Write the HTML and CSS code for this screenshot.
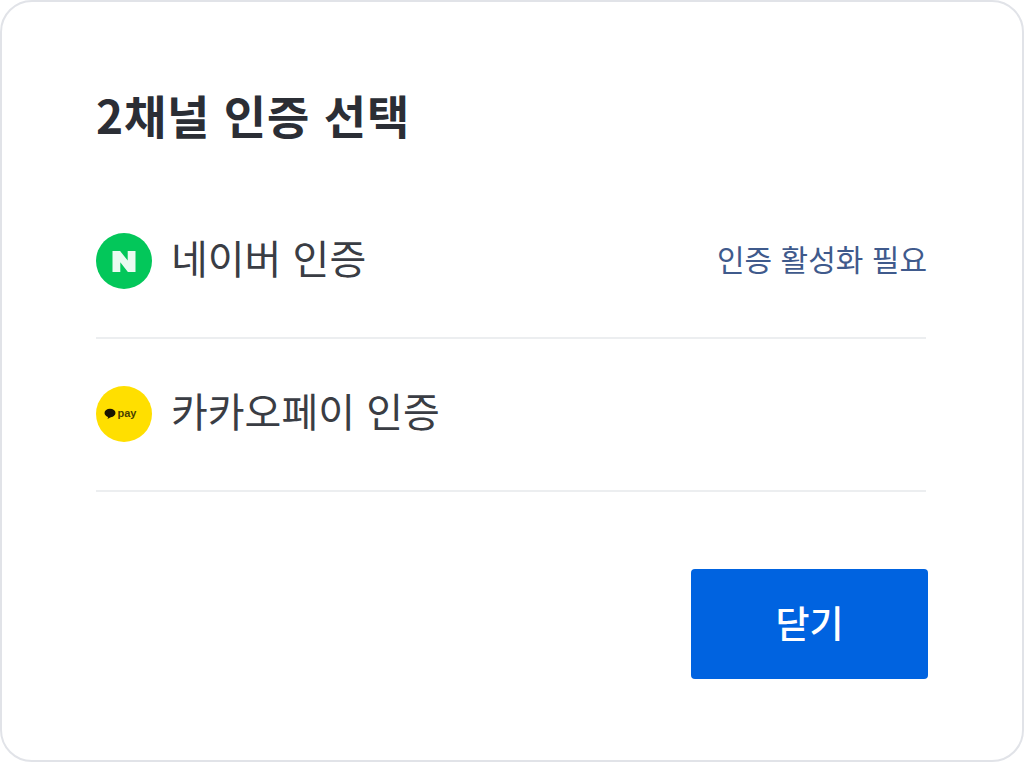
FILE: index.html
```html
<!DOCTYPE html>
<html lang="ko">
<head>
<meta charset="utf-8">
<title>2채널 인증 선택</title>
<link rel="stylesheet" href="styles.css">
</head>
<body>
<main class="dialog">
  <h1 class="title">2채널 인증 선택</h1>
  <ul class="list">
    <li class="row">
      <svg class="logo" viewBox="0 0 56 56" aria-hidden="true">
        <circle cx="28" cy="28" r="28" fill="#03c75a"/>
        <path d="M16.500 18h7.600l7.600 9.600V18h7.800v21h-7.600l-7.600-9.800V39h-7.800z" fill="#eafbf1"/>
      </svg>
      <span class="label">네이버 인증</span>
      <span class="status">인증 활성화 필요</span>
    </li>
    <li class="row">
      <svg class="logo" viewBox="0 0 56 56" aria-hidden="true">
        <circle cx="28" cy="28" r="28" fill="#ffdf00"/>
        <ellipse cx="14" cy="27" rx="5.500" ry="4.200" fill="#1a1500"/>
        <path d="M12.500 30l-1 3 3.500-2z" fill="#1a1500"/>
        <text class="pay" x="21.500" y="31">pay</text>
      </svg>
      <span class="label">카카오페이 인증</span>
    </li>
  </ul>
  <div class="actions">
    <button class="close" type="button">닫기</button>
  </div>
</main>
</body>
</html>
```
FILE: styles.css
```css
* { box-sizing: border-box; }
html, body { margin: 0; height: 100%; background: #fff; }
body { font-family: "Noto Sans CJK KR", "Noto Sans", sans-serif; color: #33363d; }
.dialog {
  width: 1024px;
  height: 762px;
  border: 2px solid #e1e3e8;
  border-radius: 32px;
  padding: 82px 96px 0 94px;
  display: flex;
  flex-direction: column;
  background: #fff;
}
.title {
  margin: 0;
  font-size: 46px;
  line-height: 60px;
  font-weight: 700;
  letter-spacing: 0.800px;
  color: #2b2e35;
}
.list { list-style: none; margin: 42px 0 0; padding: 0; }
.row {
  display: flex;
  align-items: center;
  height: 153px;
  gap: 20px;
  border-bottom: 2px solid #eceef0;
  padding-bottom: 1px;
}
.logo { width: 56px; height: 56px; flex: none; }
.pay { font-family: "Liberation Sans", sans-serif; font-size: 11px; font-weight: 700; fill: #4a3f00; }
.label { font-size: 40px; line-height: 56px; color: #3a3d44; flex: 1; margin: 0 0 8px -1px; }
.status { font-size: 30px; line-height: 44px; color: #3f5a8c; margin: 0 -1px 6px 0; }
.actions { display: flex; justify-content: flex-end; margin: 77px -2px 0 0; }
.close {
  width: 237px;
  height: 110px;
  border: 0;
  border-radius: 4px;
  padding: 0 0 4px;
  background: #0063e0;
  color: #fff;
  font-family: inherit;
  font-size: 37px;
  font-weight: 500;
}
```
